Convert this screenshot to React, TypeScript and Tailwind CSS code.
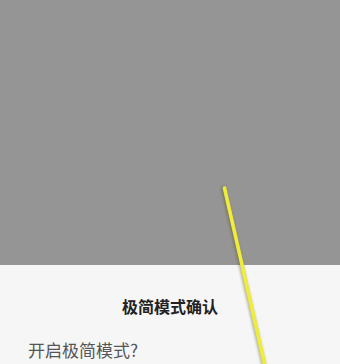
import React from "react";

export default function App() {
  return (
    <div
      className="relative w-[340px] h-[364px] overflow-hidden bg-[#959595] flex flex-col"
      style={{ fontFamily: '"Noto Sans CJK SC", "Noto Sans", sans-serif' }}
    >
      <div className="h-[265px] shrink-0" />
      <div className="flex-1 bg-[#f6f6f6] flex flex-col">
        <div className="pt-[30px] text-center text-[16px] leading-[22px] font-bold text-[#222222]">
          极简模式确认
        </div>
        <div className="mt-[21px] pl-[28px] text-[17px] leading-[24px] text-[#555555]">
          开启极简模式?
        </div>
      </div>
      <svg
        className="absolute left-0 top-0 pointer-events-none"
        width="340"
        height="364"
        viewBox="0 0 340 364"
      >
        <defs>
          <filter id="blur" x="-20%" y="-20%" width="140%" height="140%">
            <feGaussianBlur stdDeviation="1" />
          </filter>
        </defs>
        <line x1="223.5" y1="188.5" x2="265" y2="370" stroke="#4a4a10" strokeOpacity="0.35" strokeWidth="5" strokeLinecap="round" filter="url(#blur)" />
        <line x1="224.5" y1="188" x2="266" y2="370" stroke="#f0ec3a" strokeWidth="3.6" strokeLinecap="round" />
      </svg>
    </div>
  );
}
